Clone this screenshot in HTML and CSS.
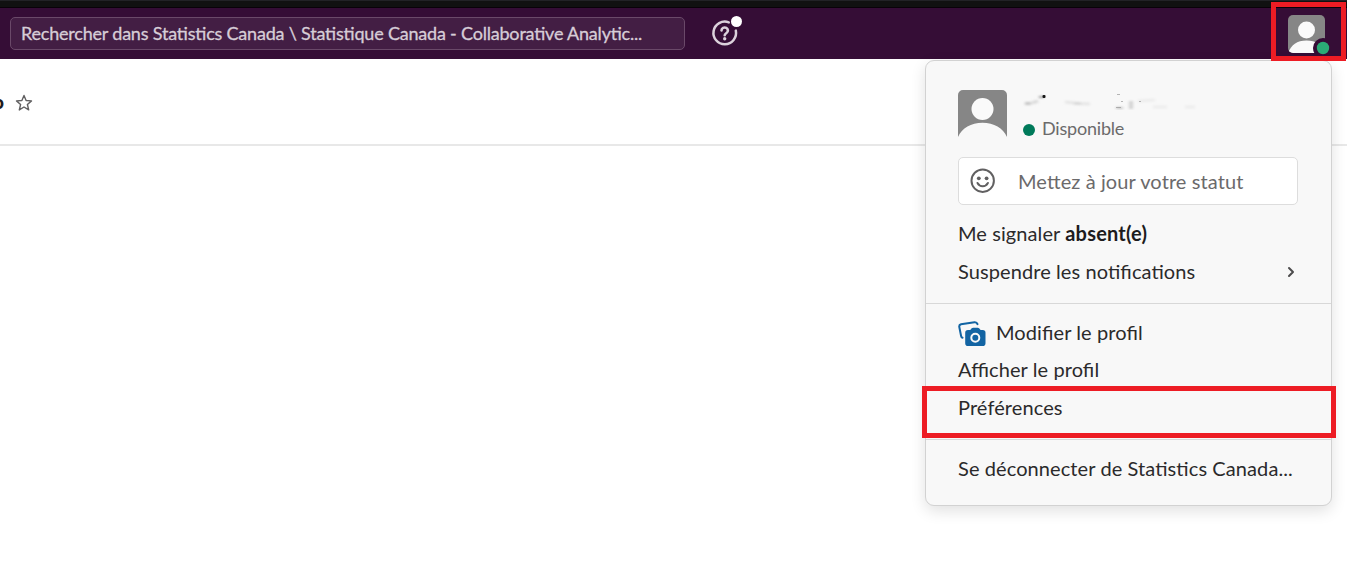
FILE: index.html
```html
<!DOCTYPE html>
<html lang="fr">
<head>
<meta charset="utf-8">
<title>Slack</title>
<link rel="stylesheet" href="styles.css">
</head>
<body>
<div class="titlebar"></div>
<header class="topbar">
  <div class="search"><span class="search-text">Rechercher dans Statistics Canada \ Statistique Canada - Collaborative Analytic...</span></div>
  <svg class="help" width="32" height="34" viewBox="0 0 32 34">
    <path d="M18.8 7.4A11.3 11.3 0 1 0 25.8 15.6" fill="none" stroke="#dbd1db" stroke-width="2.5" stroke-linecap="round"/>
    <path d="M11.500 15.400a3.200 3 0 1 1 5 2.600c-1.200.8-1.800 1.200-1.800 2.300" fill="none" stroke="#dbd1db" stroke-width="2.600" stroke-linecap="round"/>
    <circle cx="14.700" cy="23.800" r="1.700" fill="#dbd1db"/>
    <circle cx="26.500" cy="6.500" r="5.500" fill="#fff"/>
  </svg>
  <svg class="user" width="44" height="42" viewBox="0 0 44 42">
    <defs><clipPath id="userclip"><rect width="37" height="38" rx="5"/></clipPath></defs>
    <g clip-path="url(#userclip)">
      <rect width="37" height="38" fill="#868686"/>
      <circle cx="18.500" cy="15" r="8.500" fill="#fafafa"/>
      <path d="M0 38C3 30 9 25.500 18.500 25.500S34 30 37 38Z" fill="#fafafa"/>
      <circle cx="35" cy="33" r="10" fill="#350d36"/>
    </g>
    <circle cx="35" cy="33" r="6.200" fill="#2bac76"/>
  </svg>
</header>
<section class="channel">
  <b class="channel-name">o</b>
  <svg class="star" width="18" height="18" viewBox="0 0 18 18"><path d="M9 1.500l2.100 5 5.400.4-4.100 3.600 1.300 5.400L9 13l-4.700 2.900 1.300-5.400-4.100-3.600 5.400-.4z" fill="none" stroke="#616061" stroke-width="1.400" stroke-linejoin="round"/></svg>
</section>

<nav class="menu">
  <div class="profile">
    <svg width="49" height="48" viewBox="0 0 49 48">
      <path d="M0 47V5a5 5 0 0 1 5-5H44a5 5 0 0 1 5 5V47C45 38 36 32.700 24.500 32.700S4 38 0 47Z" fill="#868686"/>
      <circle cx="24.500" cy="19" r="11" fill="#fafafa"/>
    </svg>
    <div class="identity">
      <svg class="masked-name" width="180" height="18" viewBox="0 0 180 18">
        <defs><filter id="soft" x="-20%" y="-60%" width="140%" height="220%"><feGaussianBlur stdDeviation="1.600 1"/></filter></defs>
        <g filter="url(#soft)" stroke="#c4c4c4" stroke-width="3" fill="none">
          <path d="M3 11.500h6"/><path d="M10 11l6-2" stroke="#d9d9d9"/><path d="M17 5h5" stroke="#999" stroke-width="2"/>
          <path d="M43 10l14 1.500 11 .5" stroke="#e6e6e6"/><path d="M52 11.500h7" stroke="#d2d2d2" stroke-width="2"/>
          <path d="M109 9v8" stroke="#d2d2d2" stroke-width="4"/><path d="M94 16h7" stroke-width="2"/>
          <path d="M116 9l17-1M131 15l14 0M163 15h10" stroke="#ededed"/>
        </g>
        <rect x="20.500" y="3" width="3" height="3" rx="1" fill="#151515"/>
        <path d="M95 2.500h3M99 9.500h2M94 15.500h5M117 9.500h2" stroke="#8a8a8a" opacity=".6"/>
      </svg>
      <div class="presence"><i class="dot"></i><span class="presence-text">Disponible</span></div>
    </div>
  </div>
  <div class="status">
    <svg width="26" height="26" viewBox="0 0 26 26">
      <circle cx="12.700" cy="12.700" r="11.200" fill="none" stroke="#616061" stroke-width="2"/>
      <circle cx="8.800" cy="10.300" r="1.900" fill="#616061"/><circle cx="16.600" cy="10.300" r="1.900" fill="#616061"/>
      <path d="M7.500 15c1.200 2.200 3 3.200 5.200 3.200s4-1 5.200-3.200" fill="none" stroke="#616061" stroke-width="2" stroke-linecap="round"/>
    </svg>
    <span class="status-text">Mettez à jour votre statut</span>
  </div>
  <div class="group away">
    <div class="item"><span>Me signaler <b>absent(e)</b></span></div>
    <div class="item"><span>Suspendre les notifications</span>
      <svg class="chevron" width="8" height="12" viewBox="0 0 8 12"><path d="M2 2l4 4-4 4" fill="none" stroke="#4c4b4c" stroke-width="2" stroke-linecap="round" stroke-linejoin="round"/></svg>
    </div>
  </div>
  <div class="group account">
    <div class="item edit">
      <svg class="camera" width="28" height="26" viewBox="0 0 28 26">
        <path d="M4.500 16.800Q3.400 16.500 3.100 15L1.300 6Q.9 3.900 3 3.300L16.500 1.200Q18.800 1 19.500 3.100" fill="none" stroke="#1264a3" stroke-width="2" stroke-linecap="round"/>
        <path d="M10 9h2.200l1.500-1.700q.5-.6 1.400-.6h4.600q.9 0 1.400.6L22.600 9h2.100q2.800 0 2.800 2.800v10.400q0 2.800-2.800 2.800H10q-2.800 0-2.800-2.800V11.800Q7.200 9 10 9z" fill="#1264a3"/>
        <circle cx="17.300" cy="16.700" r="4" fill="none" stroke="#f8f8f8" stroke-width="2"/>
      </svg>
      <span>Modifier le profil</span>
    </div>
    <div class="item"><span>Afficher le profil</span></div>
    <div class="item"><span>Préférences</span></div>
  </div>
  <div class="group leave"><div class="item"><span>Se déconnecter de Statistics Canada...</span></div></div>
</nav>
<div class="callout callout-user"></div>
<div class="callout callout-prefs"></div>
</body>
</html>
```
FILE: styles.css
```css
* { box-sizing: border-box; }
body { margin: 0; height: 588px; overflow: hidden; position: relative; background: #fff; color: #2b2a2b; font-family: Lato, Carlito, sans-serif; font-size: 20px; }
svg { display: block; flex: none; }
span { white-space: nowrap; font-feature-settings: "liga" 1; }
.titlebar { height: 8px; background: #111; border-top: 1px solid #222226; border-bottom: 1px solid #090209; }
.topbar { height: 51px; background: #350d36; display: flex; align-items: flex-start; padding: 9px 15px 0 10px; }
.search { width: 675px; height: 33px; border: 1px solid #6a4969; border-radius: 5px; background: #431e44; color: #d7cdd7; padding: 0 0 2px 10px; display: flex; align-items: center; font-size: 18px; letter-spacing: -0.2px; -webkit-text-stroke: 0.3px #d7cdd7; }
.help { margin: -2px 0 0 25px; }
.user { margin: -2px 0 0 auto; }
.channel { height: 87px; border-bottom: 2px solid #e8e8e8; display: flex; align-items: center; }
.channel-name { width: 11px; margin-left: -7px; font-size: 19px; font-weight: 900; color: #1d1c1d; }
.star { margin-left: 11px; margin-top: 3px; }
.menu { position: absolute; left: 925px; top: 60px; width: 407px; height: 446px; background: #f8f8f8; border: 1px solid #d2d2d2; border-radius: 9px; box-shadow: 0 5px 15px rgba(0,0,0,.12); }
.profile { display: flex; height: 96px; padding: 29px 0 0 32px; gap: 15px; }
.masked-name { margin-top: 2px; }
.presence { display: flex; align-items: center; gap: 8px; height: 22px; margin-top: 7px; font-size: 18px; letter-spacing: -0.2px; color: #6b6a6b; }
.dot { width: 12px; height: 12px; border-radius: 50%; background: #007a5a; margin: 3px 0 0 1px; }
.presence-text { margin-left: -1px; }
.status { width: 340px; height: 48px; margin-left: 32px; border: 1px solid #ddd; border-radius: 5px; background: #fff; display: flex; align-items: center; padding-left: 11px; gap: 22px; color: #6b6a6b; letter-spacing: 0.1px; }
.group { padding: 0 32px; border-bottom: 1px solid #d8d8d8; letter-spacing: 0.09px; }
.group b { color: #1d1c1d; letter-spacing: 0.2px; }
.away { padding-top: 9px; height: 99px; }
.account { padding-top: 9px; height: 136px; }
.account .item { height: 37.5px; }
.leave { padding-top: 9px; border: 0; }
.item { height: 38px; display: flex; align-items: center; }
.edit { gap: 10px; }
.camera { margin-top: 4px; }
.chevron { margin: 2px 4px 0 auto; }
.callout { position: absolute; border: 5px solid #ed1c24; }
.callout-user { left: 1271px; top: 2px; width: 75px; height: 59px; }
.callout-prefs { left: 922px; top: 386px; width: 414px; height: 52px; }
```
